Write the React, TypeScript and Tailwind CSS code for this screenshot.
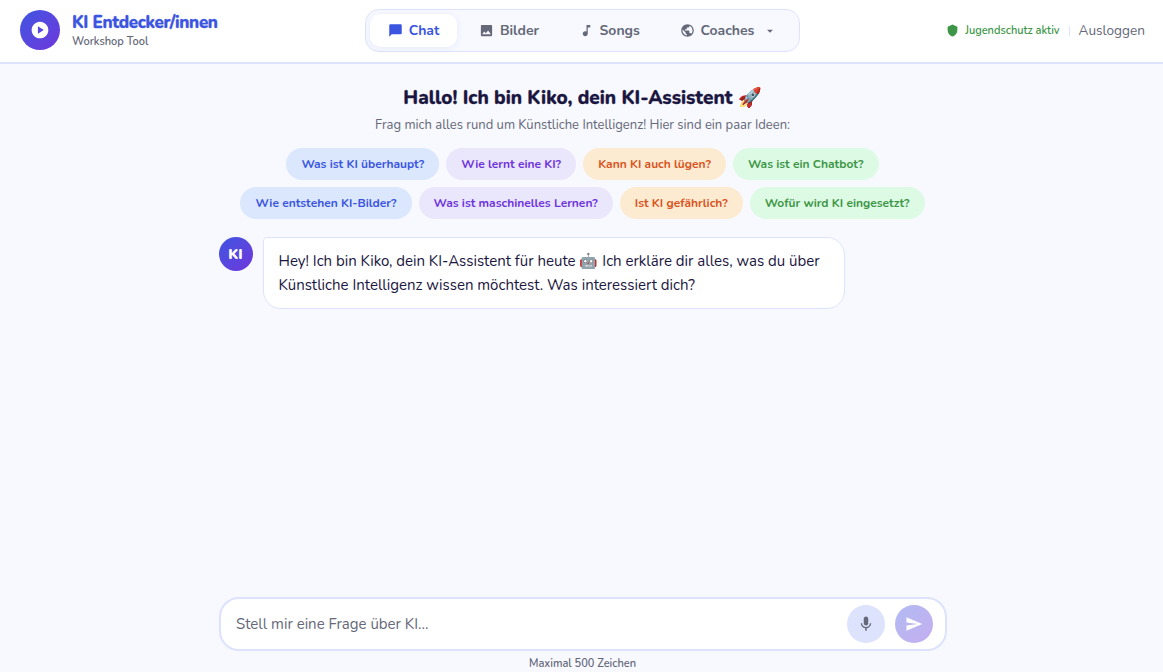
import type { ReactNode } from "react";
import {
  MdArrowDropDown,
  MdChatBubble,
  MdImage,
  MdMic,
  MdMusicNote,
  MdPlayCircle,
  MdPublic,
  MdSend,
  MdShield,
} from "react-icons/md";

const chipColors = {
  blue: "bg-[#dae7fd] text-[#3b55e0]",
  purple: "bg-[#eae6fc] text-[#6d35dc]",
  orange: "bg-[#fcebd1] text-[#d9541e]",
  green: "bg-[#ddfae5] text-[#3d9647]",
};

const ideas: { text: string; color: keyof typeof chipColors }[][] = [
  [
    { text: "Was ist KI überhaupt?", color: "blue" },
    { text: "Wie lernt eine KI?", color: "purple" },
    { text: "Kann KI auch lügen?", color: "orange" },
    { text: "Was ist ein Chatbot?", color: "green" },
  ],
  [
    { text: "Wie entstehen KI-Bilder?", color: "blue" },
    { text: "Was ist maschinelles Lernen?", color: "purple" },
    { text: "Ist KI gefährlich?", color: "orange" },
    { text: "Wofür wird KI eingesetzt?", color: "green" },
  ],
];

function Tab({ icon, label, active, children }: { icon: ReactNode; label: string; active?: boolean; children?: ReactNode }) {
  return (
    <button
      className={`flex h-[33px] items-center gap-[5.5px] rounded-[10px] px-[18px] text-[14px] font-bold ${
        active ? "bg-white text-[#3b55e0] shadow-[0_1px_6px_rgba(59,85,224,0.10)]" : "text-[#646878]"
      }`}
    >
      {icon}
      <span>{label}</span>
      {children}
    </button>
  );
}

function Header() {
  return (
    <header className="flex h-16 shrink-0 items-center justify-between border-b-2 border-[#dde3fd] bg-white px-5 pb-0.5">
      <div className="flex flex-1 items-center gap-3">
        <div className="flex size-10 items-center justify-center rounded-full bg-linear-135 from-[#3b55e0] to-[#6d35dc] text-white">
          <MdPlayCircle size={20} />
        </div>
        <div className="pt-0.5">
          <div className="text-[17px] leading-[20px] font-extrabold tracking-[-0.02em] text-[#3b55e0] [-webkit-text-stroke:0.3px]">
            KI Entdecker/innen
          </div>
          <div className="mt-px text-[11px] leading-[15px] font-semibold text-[#646878]">Workshop Tool</div>
        </div>
      </div>
      <nav className="mt-px flex items-center gap-1 rounded-[14px] border border-[#dde3fd] bg-[#f8f9ff] p-1">
        <Tab active icon={<MdChatBubble size={15} />} label="Chat" />
        <Tab icon={<MdImage size={15} />} label="Bilder" />
        <Tab icon={<MdMusicNote size={15} />} label="Songs" />
        <Tab icon={<MdPublic size={15} />} label="Coaches">
          <MdArrowDropDown size={14} className="ml-[3px]" />
        </Tab>
      </nav>
      <div className="flex flex-1 items-center justify-end pt-0.5">
        <MdShield size={13} className="text-[#3d9647]" />
        <span className="ml-1.5 text-[11px] font-semibold text-[#3d9647]">Jugendschutz aktiv</span>
        <span className="mx-[9px] h-[10px] w-px bg-[#dde3fd]" />
        <button className="text-[13.6px] text-[#646878]">Ausloggen</button>
      </div>
    </header>
  );
}

export default function App() {
  return (
    <div className="h-[672px] overflow-hidden">
      <div className="flex h-full w-[1165px] flex-col bg-[#f8f9ff] font-['Nunito','Lato',sans-serif] text-[#1a1640]">
        <Header />
        <main className="flex min-h-0 flex-1 flex-col">
          <section className="flex flex-col items-center pt-5">
            <h1 className="text-[19px] leading-[28px] font-extrabold [-webkit-text-stroke:0.3px]">
              Hallo! Ich bin Kiko, dein KI-Assistent 🚀
            </h1>
            <p className="mt-1 text-[13px] leading-[18px] text-[#646878]">
              Frag mich alles rund um Künstliche Intelligenz! Hier sind ein paar Ideen:
            </p>
            <div className="mt-[14px] flex flex-col gap-[7px]">
              {ideas.map((row, i) => (
                <div key={i} className="flex justify-center gap-[7px]">
                  {row.map((idea) => (
                    <button key={idea.text} className={`h-8 rounded-full px-[15px] text-[12px] font-bold ${chipColors[idea.color]}`}>
                      {idea.text}
                    </button>
                  ))}
                </div>
              ))}
            </div>
          </section>
          <section className="mx-auto mt-[18px] flex w-[728px] items-start gap-2.5">
            <div className="flex size-[34px] shrink-0 items-center justify-center rounded-full bg-linear-135 from-[#3b55e0] to-[#6d35dc] text-[14px] font-black text-white">
              KI
            </div>
            <div className="w-[582px] rounded-[18px] rounded-tl-[4px] border border-[#dde3fd] bg-white py-[11px] pr-[14px] pl-[15px] text-[15px] leading-[24px]">
              Hey! Ich bin Kiko, dein KI-Assistent für heute 🤖 Ich erkläre dir alles, was du über Künstliche Intelligenz wissen möchtest. Was
              interessiert dich?
            </div>
          </section>
        </main>
        <footer className="mx-auto h-[75px] w-[728px] shrink-0">
          <div className="flex h-[54px] items-center gap-2.5 rounded-[20px] border-2 border-[#dde3fd] bg-white pr-3 pl-[15.5px]">
            <input
              className="min-w-0 flex-1 text-[15px] outline-none placeholder:text-[#646878]"
              placeholder="Stell mir eine Frage über KI..."
            />
            <button className="flex size-[38px] items-center justify-center rounded-full bg-[#dde3fd] text-[#646878]">
              <MdMic size={18} />
            </button>
            <button className="flex size-[38px] items-center justify-center rounded-full bg-linear-135 from-[#3b55e0] to-[#6d35dc] text-white opacity-40">
              <MdSend size={18} />
            </button>
          </div>
          <p className="mt-[5px] text-center text-[11px] leading-[15px] font-semibold text-[#646878]">Maximal 500 Zeichen</p>
        </footer>
      </div>
    </div>
  );
}
